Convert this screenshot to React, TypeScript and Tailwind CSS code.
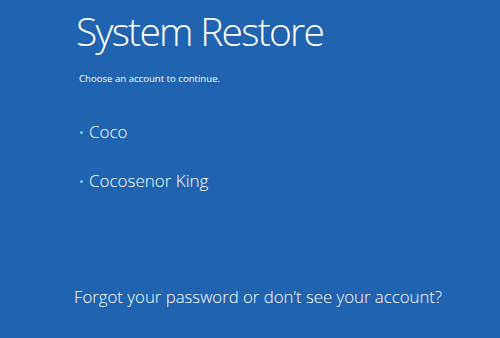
export default function App() {
  return (
    <div
      className="w-[500px] h-[338px] bg-[#1f63b1] text-white flex flex-col pl-[76px] overflow-hidden"
      style={{ fontFamily: '"Open Sans", "Noto Sans", sans-serif' }}
    >
      <div className="mt-[4px] text-[39px] font-light leading-[54px] tracking-[-1.75px]">System Restore</div>
      <div className="mt-[15px] ml-[3px] text-[9.6px] leading-[12px]">Choose an account to continue.</div>
      <div className="mt-[36px] ml-[4px] flex items-center text-[17px] font-light leading-[22px]">
        <span className="w-[3px] h-[3px] rounded-full bg-[#6cd0f5] mr-[6px]" />
        Coco
      </div>
      <div className="mt-[27px] ml-[4px] flex items-center text-[17px] font-light leading-[22px]">
        <span className="w-[3px] h-[3px] rounded-full bg-[#6cd0f5] mr-[6px]" />
        Cocosenor King
      </div>
      <div className="mt-[94px] ml-[-2px] text-[16.8px] font-light leading-[22px]">
        Forgot your password or don’t see your account?
      </div>
    </div>
  );
}
